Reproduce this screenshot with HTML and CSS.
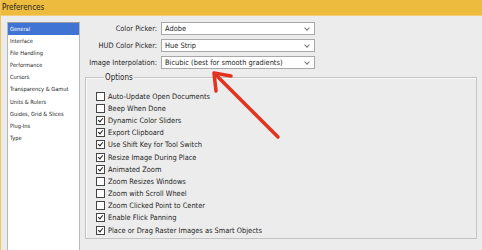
FILE: index.html
```html
<!DOCTYPE html>
<html lang="en">
<head>
    <meta charset="UTF-8">
    <title>Preferences</title>
    <link rel="stylesheet" href="styles.css">
</head>
<body>

<div class="window">
    <div class="titlebar">Preferences</div>

    <div class="main">
        <ul class="sidebar">
            <li class="selected">General</li>
            <li>Interface</li>
            <li>File Handling</li>
            <li>Performance</li>
            <li>Cursors</li>
            <li>Transparency &amp; Gamut</li>
            <li>Units &amp; Rulers</li>
            <li>Guides, Grid &amp; Slices</li>
            <li>Plug-Ins</li>
            <li>Type</li>
        </ul>

        <div class="content">
            <div class="field-grid">
                <label>Color Picker:</label>
                <div class="dropdown">Adobe<span class="chevron"></span></div>
                <label>HUD Color Picker:</label>
                <div class="dropdown">Hue Strip<span class="chevron"></span></div>
                <label>Image Interpolation:</label>
                <div class="dropdown">Bicubic (best for smooth gradients)<span class="chevron"></span></div>
            </div>

            <fieldset class="options">
                <legend>Options</legend>
                <div class="check"><span class="box"></span>Auto-Update Open Documents</div>
                <div class="check"><span class="box"></span>Beep When Done</div>
                <div class="check"><span class="box on"></span>Dynamic Color Sliders</div>
                <div class="check"><span class="box on"></span>Export Clipboard</div>
                <div class="check"><span class="box on"></span>Use Shift Key for Tool Switch</div>
                <div class="check"><span class="box on"></span>Resize Image During Place</div>
                <div class="check"><span class="box on"></span>Animated Zoom</div>
                <div class="check"><span class="box"></span>Zoom Resizes Windows</div>
                <div class="check"><span class="box"></span>Zoom with Scroll Wheel</div>
                <div class="check"><span class="box"></span>Zoom Clicked Point to Center</div>
                <div class="check"><span class="box on"></span>Enable Flick Panning</div>
                <div class="check"><span class="box on"></span>Place or Drag Raster Images as Smart Objects</div>
            </fieldset>
        </div>
    </div>

    <svg class="arrow" width="482" height="250" viewBox="0 0 482 250">
        <line x1="215" y1="75" x2="277" y2="137" stroke="#e3321d" stroke-width="3.5" stroke-linecap="round"/>
        <polyline points="230,76 213,73 215,91" fill="none" stroke="#e3321d" stroke-width="3.5" stroke-linecap="round" stroke-linejoin="round"/>
    </svg>
</div>

</body>
</html>
```

FILE: styles.css
```css
body {
    margin: 0;
    font-family: 'DejaVu Sans Condensed', 'Liberation Sans', Arial, sans-serif;
    font-size: 7.4px;
    color: #1e1e1e;
}

.window {
    position: relative;
    width: 481px;
    height: 250px;
    overflow: hidden;
    background-color: #ececec;
    border-left: 1px solid #efc65e;
    white-space: nowrap;
}

.titlebar {
    height: 15px;
    line-height: 15px;
    padding-left: 1px;
    font-size: 8px;
    background-color: #edbb3e;
    border-bottom: 1px solid #f2cf77;
}

.main {
    display: flex;
    padding-top: 6px;
}

.sidebar {
    list-style: none;
    margin: 0 0 0 6px;
    padding: 0;
    width: 71px;
    height: 240px;
    background-color: #fff;
    border: 1px solid #b9b9b9;
    border-top-color: #9c9c9c;
}

.sidebar li {
    height: 12.1px;
    line-height: 12px;
    padding-left: 2px;
    font-size: 5.7px;
}

.sidebar li.selected {
    background-color: #3f74d4;
    color: #fff;
}

.content {
    flex: 1;
    padding-left: 5px;
    padding-right: 5px;
}

.field-grid {
    display: grid;
    grid-template-columns: 72px 154px;
    column-gap: 4px;
    row-gap: 4px;
    align-items: center;
}

.field-grid label {
    text-align: right;
}

.dropdown {
    position: relative;
    height: 11px;
    line-height: 11px;
    padding-left: 3px;
    background-color: #fff;
    border: 1px solid #a8a8a8;
}

.chevron {
    position: absolute;
    right: 5px;
    top: 3px;
    width: 3px;
    height: 3px;
    border-right: 1px solid #777;
    border-bottom: 1px solid #777;
    transform: rotate(45deg);
}

.options {
    margin: 4px 0 0 0;
    padding: 8px 0 0 10px;
    height: 156px;
    border: 1px solid #c4c4c4;
    box-shadow: inset 1px 1px 0 #fafafa;
}

.options legend {
    padding: 0 1px;
    margin-left: 8px;
    font-size: 8px;
}

.check {
    display: flex;
    align-items: center;
    height: 12.2px;
}

.box {
    position: relative;
    width: 7px;
    height: 7px;
    margin-right: 3px;
    background-color: #fff;
    border: 1px solid #444;
}

.box.on::after {
    content: "";
    position: absolute;
    left: 2px;
    top: 0;
    width: 2px;
    height: 4px;
    border-right: 1px solid #222;
    border-bottom: 1px solid #222;
    transform: rotate(40deg);
}

.arrow {
    position: absolute;
    left: 0;
    top: 0;
    pointer-events: none;
}
```
